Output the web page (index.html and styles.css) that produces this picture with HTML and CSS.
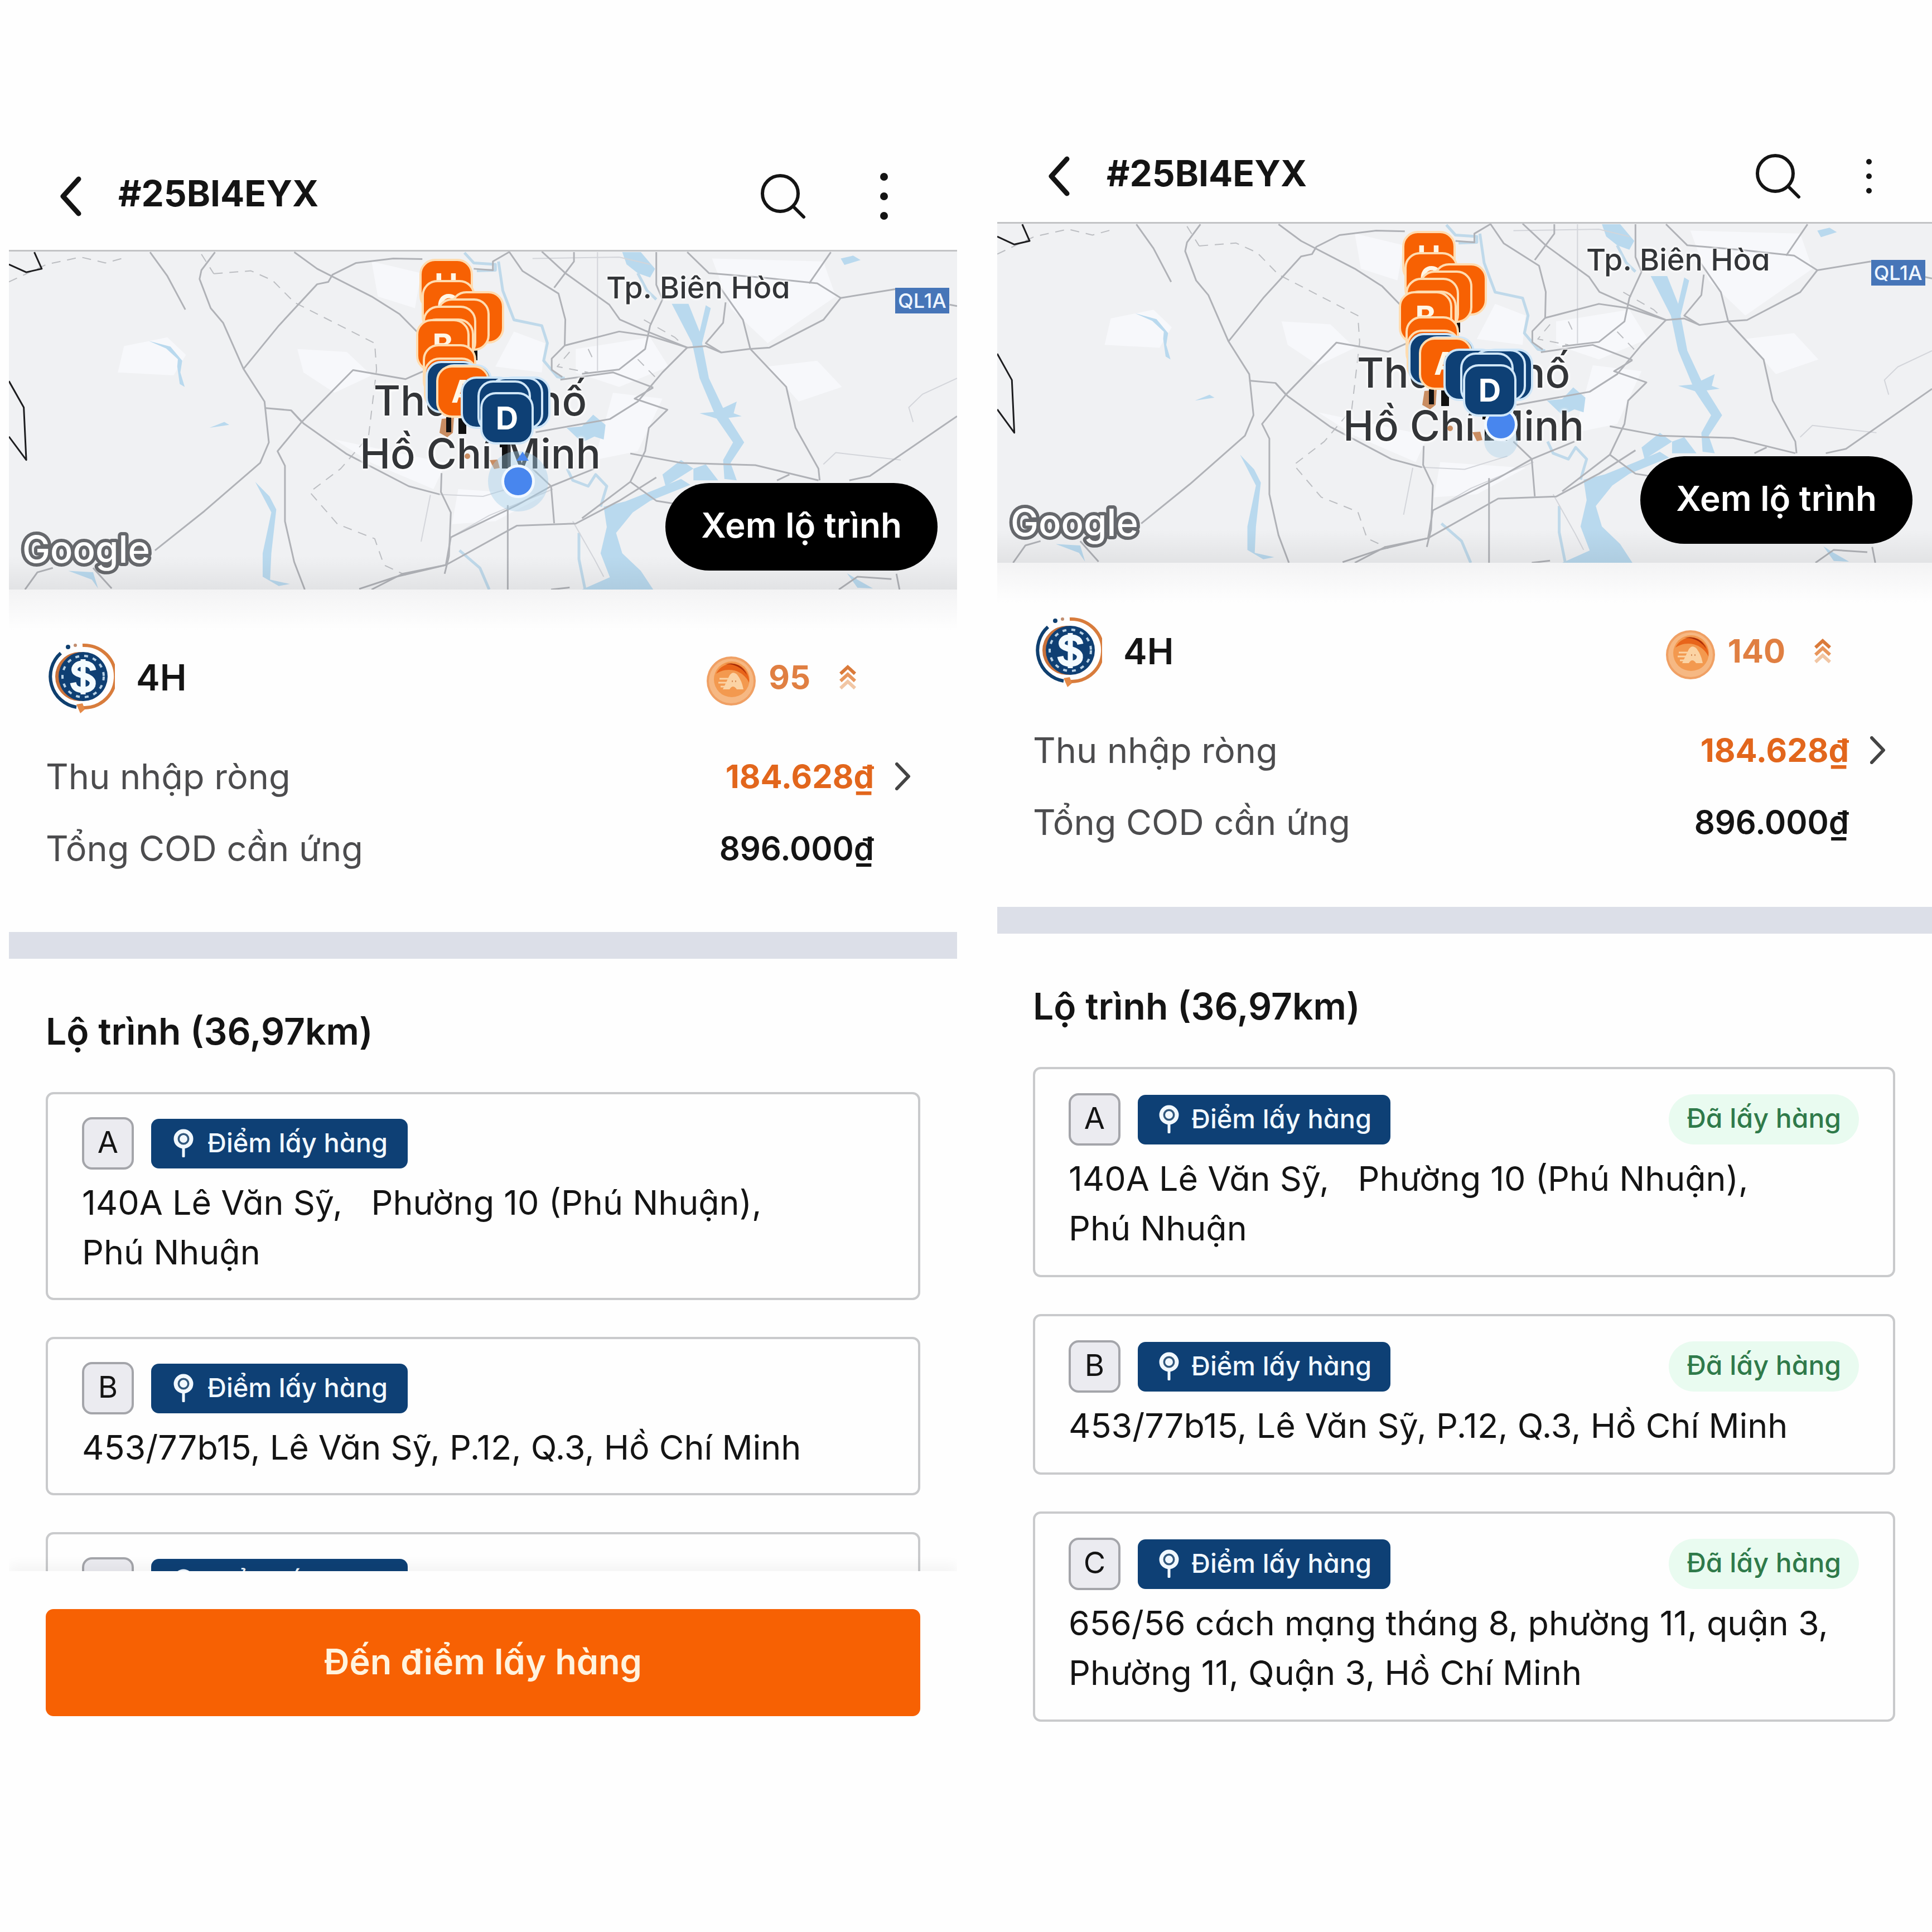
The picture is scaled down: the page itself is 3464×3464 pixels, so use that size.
FILE: index.html
```html
<!DOCTYPE html>
<html lang="vi">
<head>
<meta charset="utf-8">
<meta name="viewport" content="width=device-width, initial-scale=1">
<title>#25BI4EYX</title>
<link rel="stylesheet" href="styles.css">
</head>
<body>
<svg class="sprite" aria-hidden="true">
  <symbol id="terrain" viewBox="14 366 1532 1158" preserveAspectRatio="none">
    <g class="patch">
      <path d="M200 690 L270 660 L300 720 L280 790 L190 780 Z"/>
      <path d="M480 700 L560 710 L600 790 L540 850 L490 780 Z"/>
      <path d="M600 400 L680 440 L670 560 L610 520 Z"/>
      <path d="M830 640 L880 680 L875 780 L800 760 Z"/>
      <path d="M930 700 L1050 660 L1080 760 L1000 830 L930 780 Z"/>
      <path d="M1150 390 L1330 400 L1350 520 L1240 680 L1180 560 Z"/>
      <path d="M990 850 L1070 870 L1030 1050 L960 1080 Z"/>
      <path d="M540 1010 L720 1090 L700 1180 L600 1090 Z"/>
      <path d="M740 1180 L880 1200 L800 1290 L730 1300 Z"/>
      <path d="M1240 760 L1320 740 L1360 830 L1290 880 Z"/>
    </g>
    <g class="water">
      <path d="M975 1240 L1010 1222 L1060 1180 L1100 1145 L1115 1165 L1050 1220 L1022 1260 L995 1330 L1005 1400 L1035 1460 L1055 1524 L940 1524 L985 1482 L970 1400 L980 1310 Z"/>
      <path d="M915 970 L940 965 L958 925 L978 960 L975 1010 L960 1000 L940 1020 Z"/>
      <path d="M1130 920 L1155 915 L1190 880 L1185 920 L1198 930 L1160 940 Z"/>
      <path d="M1085 545 L1112 545 L1130 640 L1140 550 L1148 560 L1134 680 L1145 800 L1172 920 L1202 1020 L1180 1090 L1190 1150 L1170 1145 L1168 1080 L1184 1020 L1158 940 L1130 800 L1118 680 Z"/>
      <path d="M1005 368 L1035 368 L1058 425 L1050 455 L1030 440 L1012 410 Z"/>
      <path d="M1100 1080 L1120 1110 L1075 1170 L1070 1130 Z"/>
      <path d="M1120 1110 L1140 1095 L1160 1150 L1120 1150 Z"/>
      <path d="M1358 390 L1378 380 L1390 395 L1364 412 Z"/>
      <path d="M110 1460 L150 1465 L158 1520 L148 1490 Z"/>
      <path d="M338 970 L362 950 L370 960 Z"/>
      <path d="M240 672 L275 692 L294 740 L291 780 L298 830 L290 820 L286 760 L287 735 L268 698 Z"/>
      <path d="M412 1155 L435 1205 L446 1250 L438 1400 L436 1490 L468 1505 L450 1512 L424 1480 L424 1400 L438 1260 Z"/>
      <path d="M1368 1468 L1385 1490 L1410 1520 L1385 1518 Z"/>
    </g>
    <g class="stream">
      <path d="M750 370 L765 405 L800 410 L800 430 L770 432"/>
      <path d="M805 400 L812 500 L830 600 L875 620 L884 680 L878 740 L900 795 L912 800"/>
      <path d="M916 1110 L925 1150 L950 1170 L962 1130 L980 1170 L970 1240"/>
      <path d="M935 1330 L935 1420 L945 1524"/>
      <path d="M742 1390 L775 1450 L790 1524"/>
      <path d="M1030 440 L1045 500 L1060 530"/>
    </g>
    <g class="road-minor">
      <path d="M965 368 L965 775"/>
      <path d="M860 390 L1000 385 L1050 410"/>
      <path d="M1546 800 L1490 855 L1468 900 L1475 950"/>
      <path d="M1330 1095 L1350 1055 L1455 1080"/>
      <path d="M728 1345 L790 1270 L893 1180"/>
      <path d="M710 1198 L780 1205 L850 1160"/>
      <path d="M695 1200 L680 1360"/>
      <path d="M925 1290 L960 1420 L975 1480"/>
    </g>
    <g class="road-dash">
      <path d="M345 442 L405 432 L440 465 L475 540 L605 680 L608 770 L595 1000 L550 1110 L500 1190 L545 1300 L605 1350 L620 1440 L655 1475"/>
      <path d="M14 470 L75 410 L130 385 L170 405 L205 385 M325 375 L345 442"/>
      <path d="M920 710 L900 760 L950 780 M950 700 L960 745 M1030 735 L1060 800 M1040 600 L1090 660 L1100 680"/>
    </g>
    <g class="road">
      <path d="M242 368 L270 450 L299 565"/>
      <path d="M347 368 L325 430 L322 460 L340 560 L360 610 L393 768 L427 880 L434 1020 L420 1090 L330 1255 L250 1390"/>
      <path d="M427 902 L470 910 L487 950 L448 1050 L460 1100 L460 1290 L475 1430 L492 1524"/>
      <path d="M393 768 L450 620 L512 478 L530 470 L537 445 L575 405 L635 390 L682 392"/>
      <path d="M475 368 L512 425 L600 520 L645 580 L680 655"/>
      <path d="M487 950 L570 772 L655 803 L690 770"/>
      <path d="M470 910 L490 955 L560 1060 L660 1170 L710 1198"/>
      <path d="M822 366 L844 433 L902 510 L913 599 L912 688 L891 733 L891 771 L908 796"/>
      <path d="M912 688 L1000 640 L1050 655 L1110 695 L1140 690 L1165 712 L1210 700 L1243 695 L1330 600 L1358 525 L1446 495"/>
      <path d="M875 366 L913 440 L984 548 L1001 599 L1042 637 L1110 695"/>
      <path d="M927 368 L927 400 L895 490"/>
      <path d="M822 368 L796 400 L796 430 L765 425"/>
      <path d="M1060 368 L1060 480 L1070 530 L1050 620 L1042 700 L1000 770 L940 785"/>
      <path d="M1110 368 L1145 440 L1230 455 L1320 475 L1358 525"/>
      <path d="M1342 368 L1307 475"/>
      <path d="M1172 540 L1168 610 L1140 680 L1165 712"/>
      <path d="M1160 480 L1200 600 L1212 700 L1270 830 L1285 970 L1322 1110 L1324 1150"/>
      <path d="M1110 695 L1070 780 L1030 880 L985 940 L865 985"/>
      <path d="M905 805 L990 780 L1055 832"/>
      <path d="M1055 832 L1025 870 L1078 908 L1048 970 L1042 1050 L1018 1155 L940 1280"/>
      <path d="M1018 1058 L1100 1090 L1220 1098 L1322 1150"/>
      <path d="M1372 1150 L1405 1135 L1546 930"/>
      <path d="M580 1522 L640 1480 L720 1440 L728 1345 L835 1235 L890 1170 L960 1110"/>
      <path d="M600 1524 L650 1470 L720 1440 L835 1305 L930 1298 L1000 1220 L1060 1140"/>
      <path d="M713 1125 L712 1190 L728 1260 L725 1410 L718 1470"/>
      <path d="M820 1235 L820 1524"/>
      <path d="M860 1110 L890 1170 L895 1297"/>
      <path d="M1018 1155 L1060 1220 L1090 1230"/>
      <path d="M40 1524 L60 1465 L85 1450 M150 1450 L180 1520"/>
      <path d="M1355 1524 L1385 1480 L1440 1488 M1448 1470 L1453 1524"/>
      <path d="M890 1524 L920 1517"/>
      <path d="M1255 1150 L1275 1130 M1534 548 L1546 553"/>
    </g>
    <g class="frontier">
      <path d="M55 368 L67 425 L42 437 L14 410"/>
      <path d="M14 810 L38 900 L42 1080 L14 1000"/>
    </g>
  </symbol>

  <symbol id="stems" viewBox="0 0 300 460">
    <g fill="#c98d62">
      <path d="M62 300 L84 298 L82 325 L72 333 L58 325 Z"/>
      <circle cx="108" cy="367" r="5"/>
      <path d="M148 374 L162 373 L166 388 L156 390 Z"/>
    </g>
    <path fill="#111" d="M118 177h8v18h-8zM70 297h9v27h-9zM92 299h8l6 8v20h-14zM166 345h14v44h-10v-38h-4z"/>
  </symbol>

  <symbol id="back" viewBox="0 0 40 72">
    <path d="M35 5 L7 36 L35 67" fill="none" stroke="#141414" stroke-width="9" stroke-linecap="round" stroke-linejoin="round"/>
  </symbol>
  <symbol id="search" viewBox="0 0 82 82">
    <circle cx="36" cy="36" r="32" fill="none" stroke="#141414" stroke-width="6"/>
    <path d="M59 59 L78 78" stroke="#141414" stroke-width="6" stroke-linecap="round"/>
  </symbol>
  <symbol id="next" viewBox="0 0 28 50">
    <path d="M3 3 L24 25 L3 47" fill="none" stroke="#444" stroke-width="6" stroke-linecap="round" stroke-linejoin="round"/>
  </symbol>
  <symbol id="service" viewBox="0 0 124 130">
    <path d="M27 22 A56 56 0 0 0 55 119" fill="none" stroke="#0f3f6f" stroke-width="6"/>
    <path d="M66 8 A56 56 0 1 1 59 119" fill="none" stroke="#d87c3c" stroke-width="6"/>
    <path d="M55 114 L66 112 L70 123 L62 130 Z" fill="#e58a48"/>
    <circle cx="40" cy="11" r="4" fill="#0f3f6f"/>
    <circle cx="53" cy="8" r="3" fill="#c28e70"/>
    <circle cx="61" cy="64" r="44" fill="#c9713a"/>
    <circle cx="67" cy="64" r="44" fill="#0f3f73"/>
    <circle cx="67" cy="64" r="37" fill="none" stroke="#b9d2e6" stroke-width="4" stroke-dasharray="7 9"/>
    <path d="M67 33 V96" stroke="#f4fbff" stroke-width="9"/>
    <path d="M85 53 C83 41 72 41 66 41 C56 41 50 47 52 54 C54 62 80 61 84 73 C86 84 76 88 67 88 C57 88 51 85 49 75" fill="none" stroke="#f4fbff" stroke-width="11"/>
  </symbol>
  <symbol id="coin" viewBox="0 0 90 104">
    <circle cx="45" cy="59" r="44" fill="#f0a064"/>
    <circle cx="45" cy="59" r="40" fill="#f6b883"/>
    <circle cx="46" cy="56" r="32" fill="#f3994f"/>
    <path d="M18 46 A31 31 0 0 1 77 62 A40 40 0 0 0 18 46 Z" fill="#e8641a"/>
    <path d="M34 29 A31 31 0 0 1 73 48 A42 42 0 0 0 34 29 Z" fill="#a62c08"/>
    <path d="M30 74 L42 49 Q48 40 56 48 Q64 58 67 74 L55 74 Q48 64 42 74 Z" fill="#fbd3a4"/>
    <path d="M24 55 H42 M22 62 H38 M26 69 H36" stroke="#fbd3a4" stroke-width="3"/>
    <path d="M47 58 v3 M53 58 v3" stroke="#d9935c" stroke-width="2"/>
  </symbol>
  <symbol id="boost" viewBox="0 0 30 46">
    <g fill="none" stroke-width="6">
      <path d="M2 17 L15 5 L28 17" stroke="#da7a3a"/>
      <path d="M2 30 L15 18 L28 30" stroke="#e8965c"/>
      <path d="M2 43 L15 31 L28 43" stroke="#f1c6a4"/>
    </g>
  </symbol>
  <symbol id="spot" viewBox="0 0 36 52">
    <circle cx="18" cy="19" r="13" fill="none" stroke="#f1f8ff" stroke-width="9"/>
    <circle cx="18" cy="19" r="7" fill="#f1f8ff"/>
    <circle cx="18" cy="19" r="9" fill="none" stroke="#34597c" stroke-width="3"/>
    <path d="M18 36 V50" stroke="#f1f8ff" stroke-width="5" stroke-linecap="round"/>
  </symbol>
</svg>

<main class="board">
  <section class="phone phone-start">
    <header class="topbar">
      <button class="icon-button" type="button" aria-label="Quay lại"><svg width="40" height="72"><use href="#back"/></svg></button>
      <h1 class="order-code">#25BI4EYX</h1>
      <button class="icon-button" type="button" aria-label="Tìm kiếm"><svg width="82" height="82"><use href="#search"/></svg></button>
      <button class="icon-button more" type="button" aria-label="Thêm"><svg width="20" height="86" viewBox="0 0 20 86"><g fill="#141414"><circle cx="10" cy="8" r="7"/><circle cx="10" cy="43" r="7"/><circle cx="10" cy="78" r="7"/></g></svg></button>
    </header>

    <div class="map">
      <svg class="map-terrain" aria-hidden="true"><use href="#terrain"/></svg>
      <span class="place place-bienhoa">Tp. Biên Hòa</span>
      <span class="place place-hcm">Thành phố<br>Hồ Chí Minh</span>
      <span class="route-shield">QL1A</span>
      <div class="cluster">
        <svg class="stems" aria-hidden="true"><use href="#stems"/></svg>
        <i class="me"></i>
        <span class="pin drop p1">H</span>
        <span class="pin drop p2">G</span>
        <span class="pin drop p3"></span>
        <span class="pin drop p4"></span>
        <span class="pin drop p5"></span>
        <span class="pin drop p6"></span>
        <span class="pin drop p7">B</span>
        <span class="pin drop p8"></span>
        <span class="pin drop p9"></span>
        <span class="pin pick p10"></span>
        <span class="pin pick p11"></span>
        <span class="pin drop p12">A</span>
        <span class="pin pick p13"></span>
        <span class="pin pick p14"></span>
        <span class="pin pick p15"></span>
        <span class="pin pick p16"></span>
        <span class="pin pick p17">D</span>
      </div>
      <svg class="map-brand" width="270" height="100"><text x="12" y="62">Google</text></svg>
      <button class="route-button" type="button">Xem lộ trình</button>
    </div>

    <div class="summary">
      <div class="service">
        <svg width="124" height="130" aria-hidden="true"><use href="#service"/></svg>
        <strong class="service-name">4H</strong>
        <svg width="90" height="104" aria-hidden="true"><use href="#coin"/></svg>
        <span class="points">95</span>
        <svg width="30" height="46" aria-hidden="true"><use href="#boost"/></svg>
      </div>
      <div class="amount">
        <span class="amount-label">Thu nhập ròng</span>
        <span class="amount-value net">184.628₫</span>
        <button class="icon-button" type="button" aria-label="Chi tiết thu nhập"><svg width="28" height="50"><use href="#next"/></svg></button>
      </div>
      <div class="amount">
        <span class="amount-label">Tổng COD cần ứng</span>
        <span class="amount-value">896.000₫</span>
      </div>
    </div>

    <div class="route">
      <h2 class="route-title">Lộ trình (36,97km)</h2>
      <ol class="stops">
        <li class="stop">
          <div class="stop-head">
            <span class="stop-letter">A</span>
            <span class="stop-tag"><svg width="36" height="52" aria-hidden="true"><use href="#spot"/></svg>Điểm lấy hàng</span>
          </div>
          <p class="address">140A Lê Văn Sỹ, &nbsp; Phường 10 (Phú Nhuận),<br>Phú Nhuận</p>
        </li>
        <li class="stop">
          <div class="stop-head">
            <span class="stop-letter">B</span>
            <span class="stop-tag"><svg width="36" height="52" aria-hidden="true"><use href="#spot"/></svg>Điểm lấy hàng</span>
          </div>
          <p class="address">453/77b15, Lê Văn Sỹ, P.12, Q.3, Hồ Chí Minh</p>
        </li>
        <li class="stop stop-peek">
          <div class="stop-head">
            <span class="stop-letter">C</span>
            <span class="stop-tag"><svg width="36" height="52" aria-hidden="true"><use href="#spot"/></svg>Điểm lấy hàng</span>
          </div>
        </li>
      </ol>
    </div>

    <footer class="actions">
      <button class="primary" type="button">Đến điểm lấy hàng</button>
    </footer>
  </section>

  <section class="phone phone-progress">
    <header class="topbar">
      <button class="icon-button" type="button" aria-label="Quay lại"><svg width="40" height="72"><use href="#back"/></svg></button>
      <h1 class="order-code">#25BI4EYX</h1>
      <button class="icon-button" type="button" aria-label="Tìm kiếm"><svg width="82" height="82"><use href="#search"/></svg></button>
      <button class="icon-button more" type="button" aria-label="Thêm"><svg width="20" height="64" viewBox="0 0 20 64"><g fill="#141414"><circle cx="10" cy="6" r="5"/><circle cx="10" cy="32" r="5"/><circle cx="10" cy="58" r="5"/></g></svg></button>
    </header>

    <div class="map">
      <svg class="map-terrain" aria-hidden="true"><use href="#terrain"/></svg>
      <span class="place place-bienhoa">Tp. Biên Hòa</span>
      <span class="place place-hcm">Thành phố<br>Hồ Chí Minh</span>
      <span class="route-shield">QL1A</span>
      <div class="cluster">
        <svg class="stems" aria-hidden="true"><use href="#stems"/></svg>
        <i class="me me-near"></i>
        <span class="pin drop p1">H</span>
        <span class="pin drop p2">G</span>
        <span class="pin drop p3"></span>
        <span class="pin drop p4"></span>
        <span class="pin drop p5"></span>
        <span class="pin drop p6"></span>
        <span class="pin drop p7">B</span>
        <span class="pin drop p8"></span>
        <span class="pin drop p9"></span>
        <span class="pin pick p10"></span>
        <span class="pin pick p11"></span>
        <span class="pin drop p12">A</span>
        <span class="pin pick p13"></span>
        <span class="pin pick p14"></span>
        <span class="pin pick p15"></span>
        <span class="pin pick p16"></span>
        <span class="pin pick p17">D</span>
      </div>
      <svg class="map-brand" width="270" height="100"><text x="12" y="62">Google</text></svg>
      <button class="route-button" type="button">Xem lộ trình</button>
    </div>

    <div class="summary">
      <div class="service">
        <svg width="124" height="130" aria-hidden="true"><use href="#service"/></svg>
        <strong class="service-name">4H</strong>
        <svg width="90" height="104" aria-hidden="true"><use href="#coin"/></svg>
        <span class="points">140</span>
        <svg width="30" height="46" aria-hidden="true"><use href="#boost"/></svg>
      </div>
      <div class="amount">
        <span class="amount-label">Thu nhập ròng</span>
        <span class="amount-value net">184.628₫</span>
        <button class="icon-button" type="button" aria-label="Chi tiết thu nhập"><svg width="28" height="50"><use href="#next"/></svg></button>
      </div>
      <div class="amount">
        <span class="amount-label">Tổng COD cần ứng</span>
        <span class="amount-value">896.000₫</span>
      </div>
    </div>

    <div class="route">
      <h2 class="route-title">Lộ trình (36,97km)</h2>
      <ol class="stops">
        <li class="stop">
          <div class="stop-head">
            <span class="stop-letter">A</span>
            <span class="stop-tag"><svg width="36" height="52" aria-hidden="true"><use href="#spot"/></svg>Điểm lấy hàng</span>
            <span class="stop-status">Đã lấy hàng</span>
          </div>
          <p class="address">140A Lê Văn Sỹ, &nbsp; Phường 10 (Phú Nhuận),<br>Phú Nhuận</p>
        </li>
        <li class="stop">
          <div class="stop-head">
            <span class="stop-letter">B</span>
            <span class="stop-tag"><svg width="36" height="52" aria-hidden="true"><use href="#spot"/></svg>Điểm lấy hàng</span>
            <span class="stop-status">Đã lấy hàng</span>
          </div>
          <p class="address">453/77b15, Lê Văn Sỹ, P.12, Q.3, Hồ Chí Minh</p>
        </li>
        <li class="stop">
          <div class="stop-head">
            <span class="stop-letter">C</span>
            <span class="stop-tag"><svg width="36" height="52" aria-hidden="true"><use href="#spot"/></svg>Điểm lấy hàng</span>
            <span class="stop-status">Đã lấy hàng</span>
          </div>
          <p class="address">656/56 cách mạng tháng 8, phường 11, quận 3,<br>Phường 11, Quận 3, Hồ Chí Minh</p>
        </li>
      </ol>
    </div>
  </section>
</main>
</body>
</html>
```
FILE: styles.css
```css
:root {
  --ink: #141414;
  --muted: #4c4c4e;
  --orange: #f76103;
  --navy: #0e4075;
  --line: #c9cacc;
}

* { box-sizing: border-box; }

body {
  margin: 0;
  background: #fefefe;
  color: var(--ink);
  font-family: Inter, "Liberation Sans", sans-serif;
  font-feature-settings: "cv11";
  font-size: 60px;
}

h1, h2, p, ol { margin: 0; padding: 0; }
ol { list-style: none; }
svg { display: block; flex: none; }
button { font: inherit; font-feature-settings: inherit; border: 0; cursor: pointer; }

.sprite { position: absolute; width: 0; height: 0; }

.board {
  display: grid;
  grid-template-columns: 1700fr 1676fr;
  gap: 72px;
  align-items: start;
  padding-left: 16px;
  min-height: 100vh;
}

.phone { min-width: 0; }
.phone-start { padding-top: 304px; }
.phone-progress { padding-top: 268px; }

/* Top bar */
.topbar {
  display: flex;
  align-items: center;
  border-bottom: 3px solid #c2c3c5;
  padding-left: 90px;
}
.phone-start .topbar { padding-right: 121px; padding-bottom: 48px; }
.phone-progress .topbar { padding-right: 103px; padding-bottom: 34px; }
.icon-button { padding: 0; background: none; }
.order-code {
  flex: 1;
  padding: 0 0 10px 66px;
  height: 96px;
  font-size: 64px;
  line-height: 86px;
  font-weight: 700;
}
.phone-start .more { margin-left: 130px; }
.phone-progress .more { margin-left: 112px; }

/* Map */
.map {
  position: relative;
  height: 606px;
  overflow: hidden;
  background: #f0f1f3;
}
.phone-progress .map { height: 608px; }
.map::after {
  content: "";
  position: absolute;
  inset: auto 0 0;
  height: 60px;
  background: linear-gradient(rgba(0, 0, 0, 0), rgba(0, 0, 0, 0.06));
}
.map-terrain { position: absolute; inset: 0; width: 100%; height: 100%; }
.patch { fill: #f7f8fb; }
.water { fill: #b9d9ee; }
.stream, .road, .road-minor, .road-dash, .frontier { fill: none; stroke-linejoin: round; }
.stream path, .road path, .road-minor path, .road-dash path, .frontier path { vector-effect: non-scaling-stroke; }
.stream { stroke: #bfd9ea; stroke-width: 5px; }
.road { stroke: #b0b2b7; stroke-width: 3px; }
.road-minor { stroke: #d3d5da; stroke-width: 2px; }
.road-dash { stroke: #bcbec2; stroke-width: 2px; stroke-dasharray: 16 12; }
.frontier { stroke: #1d1d1f; stroke-width: 3px; }

.place {
  position: absolute;
  color: #333538;
  font-weight: 500;
  text-shadow: 0 0 6px #fff, 0 0 6px #fff, 0 0 6px #fff;
  white-space: nowrap;
}
.place-bienhoa { left: 63%; top: 30px; font-size: 54px; line-height: 70px; }
.place-hcm { left: 37%; top: 220px; font-size: 74px; line-height: 95px; text-align: center; }
.route-shield {
  position: absolute;
  left: 93%;
  top: 65px;
  margin-left: 8px;
  padding: 0 5px;
  background: #4675b8;
  color: #eef5ff;
  font-size: 36px;
  line-height: 46px;
  font-weight: 500;
}

.cluster { position: absolute; left: 42%; top: 0; width: 300px; height: 460px; }
.stems { position: absolute; inset: 0; width: 300px; height: 460px; }
.pin {
  position: absolute;
  width: 96px;
  height: 94px;
  border: 4px solid #ffdcb0;
  border-radius: 28px;
  background: var(--orange);
  color: #fff6e6;
  font-size: 56px;
  line-height: 86px;
  font-weight: 700;
  text-align: center;
}
.pin.pick { border-color: #cfe6f8; background: var(--navy); color: #fff; }
.p1 { left: 22px; top: 13px; }
.p2 { left: 26px; top: 51px; }
.p3 { left: 78px; top: 71px; }
.p4 { left: 52px; top: 84px; }
.p5 { left: 28px; top: 97px; }
.p6 { left: 24px; top: 120px; }
.p7 { left: 16px; top: 121px; }
.p8 { left: 28px; top: 166px; }
.p9 { left: 30px; top: 190px; }
.p10 { left: 33px; top: 196px; }
.p11 { left: 56px; top: 202px; }
.p12 { left: 52px; top: 204px; }
.p13 { left: 96px; top: 224px; }
.p14 { left: 161px; top: 224px; }
.p15 { left: 148px; top: 225px; }
.p16 { left: 126px; top: 231px; }
.p17 { left: 131px; top: 252px; }

.me {
  position: absolute;
  left: 169px;
  top: 382px;
  width: 60px;
  height: 60px;
  border: 5px solid #f1f8ff;
  border-radius: 50%;
  background: #4886ee;
  box-shadow: 0 0 0 24px rgba(160, 204, 232, 0.4);
}
.me::before {
  content: "";
  position: absolute;
  left: 22px;
  top: -28px;
  width: 22px;
  height: 16px;
  background: #4886ee;
  clip-path: polygon(50% 0, 100% 100%, 0 100%);
}
.me-near { top: 330px; box-shadow: 0 30px 0 0 rgba(160, 204, 232, 0.35); }
.me-near::before { display: none; }

.map-brand { position: absolute; left: 12px; bottom: 10px; }
.map-brand text {
  font-size: 67px;
  font-weight: 500;
  fill: #fff;
  stroke: #66686c;
  stroke-width: 12px;
  stroke-linejoin: round;
  paint-order: stroke;
}
.route-button {
  position: absolute;
  z-index: 1;
  right: 35px;
  bottom: 34px;
  padding: 0 64px 6px;
  height: 157px;
  border-radius: 79px;
  background: #000;
  color: #fff;
  font-size: 62px;
  font-weight: 600;
  line-height: 80px;
}

/* Earnings */
.summary {
  padding: 95px 83px 110px 66px;
  border-bottom: 48px solid #dcdfe8;
  background: linear-gradient(#f3f3f4, #fefefe 72px);
}
.phone-progress .summary { padding: 96px 83px 112px 64px; }
.service {
  display: flex;
  align-items: center;
  height: 124px;
  margin-bottom: 76px;
  padding-right: 98px;
}
.service-name { flex: 1; padding-left: 38px; font-size: 64px; font-weight: 600; }
.points { padding: 0 52px 0 22px; color: #e07f42; font-weight: 700; font-size: 58px; }
.amount { display: flex; align-items: center; line-height: 80px; }
.amount + .amount { margin-top: 49px; padding-right: 66px; }
.amount-label { flex: 1; color: var(--muted); font-size: 63px; }
.amount-value { font-size: 58px; font-weight: 600; }
.amount-value.net { padding-right: 38px; color: #e2661c; font-weight: 700; }

/* Stops */
.route { padding: 90px 66px 0; }
.phone-progress .route { padding-left: 64px; }
.route-title { font-size: 66px; font-weight: 600; line-height: 80px; }
.stops { display: grid; gap: 66px; margin-top: 69px; }
.stop {
  padding: 41px 61px 37px;
  border: 4px solid var(--line);
  border-radius: 14px;
}
.phone-progress .stop { padding: 43px 61px 39px 60px; }
.stop-peek {
  height: 70px;
  padding-bottom: 0;
  border-bottom: 0;
  border-radius: 14px 14px 0 0;
  overflow: hidden;
}
.stop-head { display: flex; align-items: center; margin-bottom: 15px; }
.stop-letter {
  width: 93px;
  height: 94px;
  margin-right: 31px;
  border: 4px solid #a4a5aa;
  border-radius: 18px;
  background: #ebebf0;
  font-size: 54px;
  line-height: 82px;
  text-align: center;
}
.stop-tag {
  display: flex;
  align-items: center;
  gap: 25px;
  height: 89px;
  padding: 0 36px 3px 40px;
  border-radius: 14px;
  background: var(--navy);
  color: #f1f8ff;
  font-size: 47px;
  font-weight: 500;
}
.phone-progress .stop-tag { padding: 0 34px 3px 38px; gap: 22px; }
.stop-status {
  margin-left: auto;
  padding: 0 32px 4px;
  border-radius: 45px;
  background: #e9fbf0;
  color: #2f7a4a;
  font-size: 48px;
  line-height: 86px;
  font-weight: 500;
}
.address { font-size: 61px; line-height: 89px; white-space: nowrap; }

/* Bottom action */
.actions {
  position: relative;
  padding: 68px 66px 0;
  background: #fefefe;
  box-shadow: 0 -12px 20px rgba(0, 0, 0, 0.04);
  clip-path: inset(-40px 0 0);
}
.primary {
  display: block;
  width: 100%;
  height: 192px;
  padding: 0 0 4px;
  border-radius: 14px;
  background: var(--orange);
  color: #fff3de;
  font-size: 63px;
  font-weight: 600;
}
```
